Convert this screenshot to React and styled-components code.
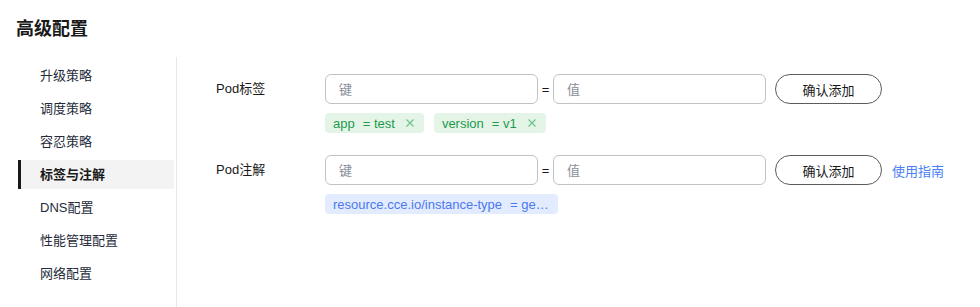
import React from "react";
import styled, { createGlobalStyle } from "styled-components";

const GlobalStyle = createGlobalStyle`
  body {
    margin: 0;
    background: #fff;
    font-family: "Liberation Sans", "Noto Sans CJK SC", sans-serif;
    font-size: 13px;
    color: #252b3a;
  }
`;

const Page = styled.div`
  width: 980px;
  height: 307px;
  overflow: hidden;
`;

const Title = styled.h2`
  margin: 17px 0 16px 16px;
  font-size: 18px;
  line-height: 24px;
  font-weight: 700;
  color: #191919;
`;

const Body = styled.div`
  display: flex;
`;

const Side = styled.ul`
  list-style: none;
  margin: 0 0 0 18px;
  padding: 4px 2px 15px 0;
  width: 156px;
  border-right: 1px solid #e8e8e8;
`;

const MenuItem = styled.li`
  height: 29px;
  line-height: 29px;
  margin-bottom: 4px;
  padding-left: 19px;
  border-left: 3px solid ${(p) => (p.$active ? "#191919" : "transparent")};
  background: ${(p) => (p.$active ? "#f3f3f3" : "transparent")};
  font-weight: ${(p) => (p.$active ? 700 : 400)};
  color: ${(p) => (p.$active ? "#191919" : "#252b3a")};
  cursor: pointer;
`;

const Main = styled.div`
  flex: 1;
  padding: 17px 0 0 39px;
  display: flex;
  flex-direction: column;
  gap: 22px;
`;

const FormRow = styled.div`
  display: grid;
  grid-template-columns: 109px 1fr;
`;

const Label = styled.div`
  line-height: 30px;
  color: #191919;
`;

const InputLine = styled.div`
  display: flex;
  align-items: center;
`;

const Input = styled.input`
  box-sizing: border-box;
  width: 213px;
  height: 30px;
  border: 1px solid #c2c2c2;
  border-radius: 6px;
  padding: 0 13px;
  font: inherit;
  color: #191919;
  outline: none;

  &::placeholder {
    color: #8a8e99;
  }
`;

const Eq = styled.span`
  width: 15px;
  text-align: center;
  color: #191919;
`;

const Button = styled.button`
  box-sizing: border-box;
  width: 107px;
  height: 30px;
  margin-left: 9px;
  border: 1px solid #5c5c5c;
  border-radius: 15px;
  background: #fff;
  font: inherit;
  color: #191919;
  cursor: pointer;
`;

const Link = styled.a`
  margin-left: 10px;
  color: #4a7ff5;
  text-decoration: none;
  cursor: pointer;
`;

const Tags = styled.div`
  display: flex;
  gap: 10px;
  margin-top: 9px;
`;

const Tag = styled.span`
  box-sizing: border-box;
  display: inline-flex;
  align-items: center;
  height: 20px;
  padding: ${(p) => (p.$closable ? "0 10px 0 8px" : "0 9px 0 8px")};
  border-radius: 4px;
  background: ${(p) => (p.$tone === "blue" ? "#e3ecff" : "#e4f5e8")};
  color: ${(p) => (p.$tone === "blue" ? "#4a78f0" : "#1d9a4c")};
  white-space: nowrap;
`;

const Key = styled.span`
  margin-right: 8px;
`;

const Close = styled.svg`
  width: 8px;
  height: 8px;
  margin-left: 11px;
  stroke: #6cc48a;
  stroke-width: 1.2;
  cursor: pointer;
`;

const menu = ["升级策略", "调度策略", "容忍策略", "标签与注解", "DNS配置", "性能管理配置", "网络配置"];

const CloseIcon = () => (
  <Close viewBox="0 0 8 8">
    <path d="M0.5 0.5L7.5 7.5M7.5 0.5L0.5 7.5" />
  </Close>
);

const Field = ({ label, link, tags }) => (
  <FormRow>
    <Label>{label}</Label>
    <div>
      <InputLine>
        <Input placeholder="键" />
        <Eq>=</Eq>
        <Input placeholder="值" />
        <Button>确认添加</Button>
        {link && <Link>{link}</Link>}
      </InputLine>
      <Tags>{tags}</Tags>
    </div>
  </FormRow>
);

export default function App() {
  return (
    <Page>
      <GlobalStyle />
      <Title>高级配置</Title>
      <Body>
        <Side>
          {menu.map((m) => (
            <MenuItem key={m} $active={m === "标签与注解"}>
              {m}
            </MenuItem>
          ))}
        </Side>
        <Main>
          <Field
            label="Pod标签"
            tags={[
              ["app", "test"],
              ["version", "v1"],
            ].map(([k, v]) => (
              <Tag key={k} $closable>
                <span>
                  <Key>{k}</Key>= {v}
                </span>
                <CloseIcon />
              </Tag>
            ))}
          />
          <Field
            label="Pod注解"
            link="使用指南"
            tags={
              <Tag $tone="blue">
                <span>
                  <Key>resource.cce.io/instance-type</Key>= ge…
                </span>
              </Tag>
            }
          />
        </Main>
      </Body>
    </Page>
  );
}
